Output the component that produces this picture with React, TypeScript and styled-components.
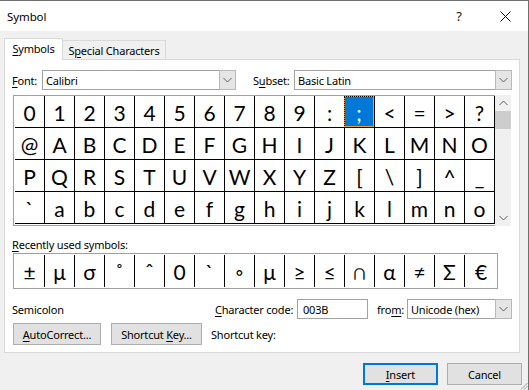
import React from 'react';
import styled, { createGlobalStyle, css } from 'styled-components';

const UI = `"Noto Sans", "Open Sans", sans-serif`;
const SYM = `Lato, "Noto Sans", "DejaVu Sans", sans-serif`;

const Global = createGlobalStyle`
  html, body { margin: 0; padding: 0; background: #fff; }
  body { font-family: ${UI}; font-size: 11px; color: #000; }
  * { box-sizing: border-box; }
`;

const Window = styled.div`
  position: relative;
  width: 529px;
  height: 390px;
  border-top: 1px solid #707070;
  border-right: 1px solid #707070;
  background: #f0f0f0;
  display: flex;
  flex-direction: column;
  font-family: ${UI};
  font-size: 11px;
  letter-spacing: -0.2px;
  overflow: hidden;
  white-space: nowrap;
`;

const TitleBar = styled.div`
  flex: none;
  height: 30px;
  background: #fff;
  display: flex;
  align-items: center;
`;

const Title = styled.div`
  flex: 1;
  padding-left: 7px;
  font-size: 11.5px;
  letter-spacing: -0.1px;
`;

const TitleButton = styled.div`
  width: 46px;
  height: 30px;
  display: flex;
  align-items: center;
  justify-content: center;
  font-size: 13px;
  color: #111;
`;

const Body = styled.div`
  flex: 1;
  display: flex;
  flex-direction: column;
  padding: 7px 0 0 4px;
`;

const Tabs = styled.div`
  display: flex;
  align-items: flex-end;
  height: 21px;
`;

const Tab = styled.div<{ $active?: boolean }>`
  display: flex;
  align-items: center;
  justify-content: center;
  border: 1px solid #d9d9d9;
  border-bottom: none;
  ${(p) =>
    p.$active
      ? css`
          width: 59px;
          height: 22px;
          background: #fff;
          margin-bottom: -1px;
          z-index: 1;
          padding-bottom: 2px;
        `
      : css`
          width: 104px;
          height: 19px;
          background: #f0f0f0;
          margin-left: -1px;
        `}
`;

const Panel = styled.div`
  width: 516px;
  height: 294px;
  background: #fff;
  border: 1px solid #d9d9d9;
  display: flex;
  flex-direction: column;
`;

const Row = styled.div<{ $mt: number; $h: number; $pl?: number }>`
  display: flex;
  align-items: center;
  margin-top: ${(p) => p.$mt}px;
  height: ${(p) => p.$h}px;
  padding-left: ${(p) => p.$pl ?? 7}px;
  flex: none;
`;

const Label = styled.div<{ $w?: number; $ml?: number }>`
  ${(p) => (p.$w ? `width: ${p.$w}px;` : '')}
  margin-left: ${(p) => p.$ml ?? 0}px;
  flex: none;
  white-space: nowrap;
`;

const U = styled.span`
  text-decoration: underline;
  text-underline-offset: 2px;
`;

const ComboBox = styled.div<{ $w: number }>`
  width: ${(p) => p.$w}px;
  height: 20px;
  border: 1px solid #a2a2a2;
  background: #fff;
  display: flex;
  flex: none;
`;

const ComboValue = styled.div`
  flex: 1;
  padding-left: 3px;
  display: flex;
  align-items: center;
`;

const DropButton = styled.div`
  width: 17px;
  background: #e5e5e5;
  border: 1px solid #b9b9b9;
  margin: -1px -1px -1px 0;
  display: flex;
  align-items: center;
  justify-content: center;
`;

const Chevron = ({ up }: { up?: boolean }) => (
  <svg width="9" height="6" viewBox="0 0 9 6">
    <polyline
      points={up ? '0.5,5 4.5,1 8.5,5' : '0.5,1 4.5,5 8.5,1'}
      fill="none"
      stroke="#606060"
      strokeWidth="1"
    />
  </svg>
);

const Combo = ({ w, value }: { w: number; value: string }) => (
  <ComboBox $w={w}>
    <ComboValue>{value}</ComboValue>
    <DropButton>
      <Chevron />
    </DropButton>
  </ComboBox>
);

const GridArea = styled.div`
  display: flex;
  margin-top: 5px;
  margin-left: 8px;
  flex: none;
`;

const CharGrid = styled.div`
  width: 482px;
  height: 131px;
  border-top: 1px solid #a0a0a0;
  border-left: 1px solid #a0a0a0;
  border-bottom: 1px solid #a0a0a0;
  padding-left: 1px;
  display: grid;
  grid-template-columns: repeat(16, 30px);
  grid-auto-rows: 32px;
  align-content: start;
`;

const Cell = styled.div<{ $selected?: boolean }>`
  border-right: 1px solid #000;
  border-bottom: 1px solid #000;
  display: flex;
  align-items: center;
  justify-content: center;
  font-family: ${SYM};
  font-size: 21px;
  letter-spacing: 0;
  line-height: 1;
  padding-top: 1px;
  ${(p) =>
    p.$selected &&
    css`
      background: #0078d7;
      color: #fff;
      box-shadow: inset 0 0 0 1px #f0a030;
      outline: 1px dotted #000;
      outline-offset: -1px;
      margin-left: -1px;
    `}
`;

const ScrollBar = styled.div`
  width: 16px;
  height: 131px;
  background: #f0f0f0;
  display: flex;
  flex-direction: column;
`;

const ScrollButton = styled.div`
  height: 16px;
  display: flex;
  align-items: center;
  justify-content: center;
  flex: none;
`;

const Track = styled.div`
  flex: 1;
`;

const Thumb = styled.div`
  height: 18px;
  background: #cdcdcd;
`;

const RecentBox = styled.div`
  margin-left: 8px;
  margin-top: 1px;
  width: 485px;
  height: 36px;
  border: 1px solid #a0a0a0;
  padding: 1px 0 0 1px;
  display: grid;
  grid-template-columns: repeat(15, 30px) 1fr;
  flex: none;
`;

const RecentCell = styled.div<{ $last?: boolean }>`
  border-right: ${(p) => (p.$last ? 'none' : '1px solid #000')};
  display: flex;
  align-items: center;
  justify-content: center;
  font-family: ${SYM};
  font-size: 21px;
  letter-spacing: 0;
  line-height: 1;
  height: 32px;
`;

const TextBox = styled.div<{ $w: number }>`
  width: ${(p) => p.$w}px;
  height: 20px;
  border: 1px solid #a2a2a2;
  background: #fff;
  padding-left: 5px;
  display: flex;
  align-items: center;
  flex: none;
`;

const Button = styled.div<{ $w: number; $ml?: number; $default?: boolean }>`
  width: ${(p) => p.$w}px;
  height: 22px;
  margin-left: ${(p) => p.$ml ?? 0}px;
  background: #e1e1e1;
  border: ${(p) => (p.$default ? '2px solid #0078d7' : '1px solid #adadad')};
  display: flex;
  align-items: center;
  justify-content: center;
  flex: none;
`;

const Footer = styled.div`
  display: flex;
  justify-content: flex-end;
  margin-top: 10px;
  padding-right: 6px;
`;

const Grip = styled.svg`
  position: absolute;
  right: 0;
  bottom: 0;
`;

const rows = ['0123456789:;<=>?', '@ABCDEFGHIJKLMNO', 'PQRSTUVWXYZ[\\]^_', '`abcdefghijklmno'];
const recent = ['±', 'μ', 'σ', '˚', 'ˆ', '0', '`', '◦', 'μ', '≥', '≤', '∩', 'α', '≠', 'Σ', '€'];

export default function App() {
  return (
    <>
      <Global />
      <Window>
        <TitleBar>
          <Title>Symbol</Title>
          <TitleButton>?</TitleButton>
          <TitleButton>
            <svg width="11" height="11" viewBox="0 0 11 11">
              <path d="M0.5 0.5 L10.5 10.5 M10.5 0.5 L0.5 10.5" stroke="#111" strokeWidth="1" />
            </svg>
          </TitleButton>
        </TitleBar>
        <Body>
          <Tabs>
            <Tab $active>
              <span>
                <U>S</U>ymbols
              </span>
            </Tab>
            <Tab>
              <span>
                S<U>p</U>ecial Characters
              </span>
            </Tab>
          </Tabs>
          <Panel>
            <Row $mt={10} $h={20}>
              <Label $w={30}>
                <U>F</U>ont:
              </Label>
              <Combo w={194} value="Calibri" />
              <Label $w={41} $ml={17}>
                S<U>u</U>bset:
              </Label>
              <Combo w={218} value="Basic Latin" />
            </Row>
            <GridArea>
              <CharGrid>
                {rows.map((r, ri) =>
                  r.split('').map((ch, ci) => (
                    <Cell key={`${ri}-${ci}`} $selected={ri === 0 && ci === 11}>
                      {ch}
                    </Cell>
                  ))
                )}
              </CharGrid>
              <ScrollBar>
                <ScrollButton>
                  <Chevron up />
                </ScrollButton>
                <Thumb />
                <Track />
                <ScrollButton>
                  <Chevron />
                </ScrollButton>
              </ScrollBar>
            </GridArea>
            <Row $mt={10} $h={16}>
              <Label>
                <U>R</U>ecently used symbols:
              </Label>
            </Row>
            <RecentBox>
              {recent.map((ch, i) => (
                <RecentCell key={i} $last={i === recent.length - 1}>
                  {ch}
                </RecentCell>
              ))}
            </RecentBox>
            <Row $mt={10} $h={20}>
              <Label $w={203}>Semicolon</Label>
              <Label $w={82}>
                <U>C</U>haracter code:
              </Label>
              <TextBox $w={71}>003B</TextBox>
              <Label $w={30} $ml={9}>
                fro<U>m</U>:
              </Label>
              <Combo w={105} value="Unicode (hex)" />
            </Row>
            <Row $mt={4} $h={22} $pl={8}>
              <Button $w={88}>
                <span>
                  <U>A</U>utoCorrect...
                </span>
              </Button>
              <Button $w={91} $ml={10}>
                <span>
                  Shortcut <U>K</U>ey...
                </span>
              </Button>
              <Label $ml={9}>Shortcut key:</Label>
            </Row>
          </Panel>
          <Footer>
            <Button $w={75} $default>
              <span>
                <U>I</U>nsert
              </span>
            </Button>
            <Button $w={75} $ml={9}>
              Cancel
            </Button>
          </Footer>
        </Body>
        <Grip width="9" height="9" viewBox="0 0 9 9">
          <path d="M8.5 2 L2 8.5 M8.5 5 L5 8.5" stroke="#a0a0a0" strokeWidth="1" />
        </Grip>
      </Window>
    </>
  );
}
